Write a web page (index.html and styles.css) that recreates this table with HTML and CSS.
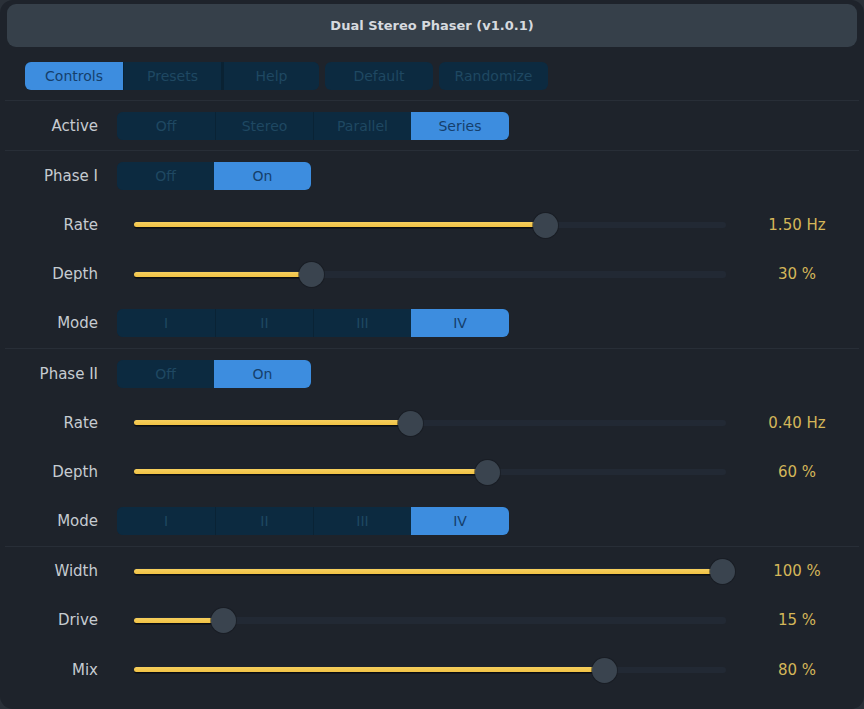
FILE: index.html
```html
<!DOCTYPE html>
<html lang="en">
<head>
<meta charset="utf-8">
<title>Dual Stereo Phaser</title>
<link rel="stylesheet" href="styles.css">
</head>
<body>
<div class="window">
  <header class="title">Dual Stereo Phaser (v1.0.1)</header>
  <nav class="tabs">
    <div class="seg tabgroup">
      <span class="opt on">Controls</span>
      <span class="opt">Presets</span>
      <span class="opt split">Help</span>
    </div>
    <span class="btn">Default</span>
    <span class="btn">Randomize</span>
  </nav>

  <section class="group">
    <div class="row">
      <span class="label">Active</span>
      <div class="seg seg4">
        <span class="opt">Off</span><span class="opt">Stereo</span><span class="opt">Parallel</span><span class="opt on">Series</span>
      </div>
    </div>
  </section>

  <section class="group">
    <div class="row">
      <span class="label">Phase I</span>
      <div class="seg seg2">
        <span class="opt">Off</span><span class="opt on">On</span>
      </div>
    </div>
    <div class="row">
      <span class="label">Rate</span>
      <div class="slider" style="--p:0.698"><span class="track"></span><span class="fill"></span><span class="thumb"></span></div>
      <span class="value">1.50 Hz</span>
    </div>
    <div class="row">
      <span class="label">Depth</span>
      <div class="slider" style="--p:0.30"><span class="track"></span><span class="fill"></span><span class="thumb"></span></div>
      <span class="value">30 %</span>
    </div>
    <div class="row">
      <span class="label">Mode</span>
      <div class="seg seg4">
        <span class="opt">I</span><span class="opt">II</span><span class="opt">III</span><span class="opt on">IV</span>
      </div>
    </div>
  </section>

  <section class="group">
    <div class="row">
      <span class="label">Phase II</span>
      <div class="seg seg2">
        <span class="opt">Off</span><span class="opt on">On</span>
      </div>
    </div>
    <div class="row">
      <span class="label">Rate</span>
      <div class="slider" style="--p:0.468"><span class="track"></span><span class="fill"></span><span class="thumb"></span></div>
      <span class="value">0.40 Hz</span>
    </div>
    <div class="row">
      <span class="label">Depth</span>
      <div class="slider" style="--p:0.60"><span class="track"></span><span class="fill"></span><span class="thumb"></span></div>
      <span class="value">60 %</span>
    </div>
    <div class="row">
      <span class="label">Mode</span>
      <div class="seg seg4">
        <span class="opt">I</span><span class="opt">II</span><span class="opt">III</span><span class="opt on">IV</span>
      </div>
    </div>
  </section>

  <section class="group">
    <div class="row">
      <span class="label">Width</span>
      <div class="slider" style="--p:1"><span class="track"></span><span class="fill"></span><span class="thumb"></span></div>
      <span class="value">100 %</span>
    </div>
    <div class="row">
      <span class="label">Drive</span>
      <div class="slider" style="--p:0.15"><span class="track"></span><span class="fill"></span><span class="thumb"></span></div>
      <span class="value">15 %</span>
    </div>
    <div class="row">
      <span class="label">Mix</span>
      <div class="slider" style="--p:0.80"><span class="track"></span><span class="fill"></span><span class="thumb"></span></div>
      <span class="value">80 %</span>
    </div>
  </section>
</div>
</body>
</html>
```

FILE: styles.css
```css
* { box-sizing: border-box; }

html, body {
  margin: 0;
  padding: 0;
  background: #2a3038;
}

body {
  font-family: "DejaVu Sans", "Liberation Sans", sans-serif;
  width: 864px;
  height: 709px;
  overflow: hidden;
}

.window {
  width: 864px;
  height: 709px;
  border-radius: 13px;
  background: #1e232b;
  padding: 4px 7px 0 7px;
}

.title {
  height: 43px;
  border-radius: 9px;
  background: #36404a;
  color: #d6dadf;
  font-weight: bold;
  font-size: 13px;
  display: flex;
  align-items: center;
  justify-content: center;
}

.tabs {
  display: flex;
  gap: 6px;
  margin: 15px 0 10px 18px;
  height: 28px;
}

.seg {
  display: flex;
  height: 28px;
  border-radius: 6px;
  overflow: hidden;
  background: #0c2a40;
}

.opt {
  display: flex;
  align-items: center;
  justify-content: center;
  font-size: 14px;
  color: #1f4862;
  background: #0c2a40;
  border-left: 1px solid #0a2335;
}

.opt:first-child { border-left: none; }

.opt.on {
  background: #3d8ddf;
  color: #153f6c;
  border-left: none;
}

.tabgroup .opt { width: 98px; }
.tabgroup .opt.split { border-left: 3px solid #0a2233; }

.btn {
  display: flex;
  align-items: center;
  justify-content: center;
  height: 28px;
  border-radius: 6px;
  background: #0c2a40;
  color: #1f4862;
  font-size: 14px;
}
.btn:nth-of-type(1) { width: 108px; }
.btn:nth-of-type(2) { width: 109px; }

.seg4 { width: 392px; }
.seg4 .opt { width: 98px; }
.seg2 { width: 194px; }
.seg2 .opt { width: 97px; }

.group {
  border-top: 1px solid #282e37;
  margin: 0 -2px;
  padding: 0 2px;
}

.row {
  height: 49.2px;
  display: grid;
  grid-template-columns: 110px 626px 108px;
  align-items: center;
}

.label {
  padding-right: 19px;
  text-align: right;
  color: #c6cbd1;
  font-size: 15px;
}

.value {
  text-align: center;
  color: #d4b659;
  font-size: 15px;
}

.slider {
  position: relative;
  height: 28px;
  margin: 0 17px;
}

.track {
  position: absolute;
  left: 0;
  right: 0;
  top: 11px;
  height: 6.5px;
  border-radius: 3px;
  background: #222934;
}

.fill {
  position: absolute;
  left: 0;
  top: 11.5px;
  height: 5px;
  width: calc(2px + var(--p) * 586px);
  border-radius: 3px 0 0 3px;
  background: linear-gradient(#f6cf5e, #f1c244);
  box-shadow: 0 1.5px 0 #0b0d11;
}

.thumb {
  position: absolute;
  top: 2px;
  left: calc(2px + var(--p) * 586px);
  width: 25px;
  height: 25px;
  margin-left: -12.5px;
  border-radius: 50%;
  background: #3a444f;
  box-shadow: 0 0 0 1px rgba(20, 24, 30, 0.5);
}
```
